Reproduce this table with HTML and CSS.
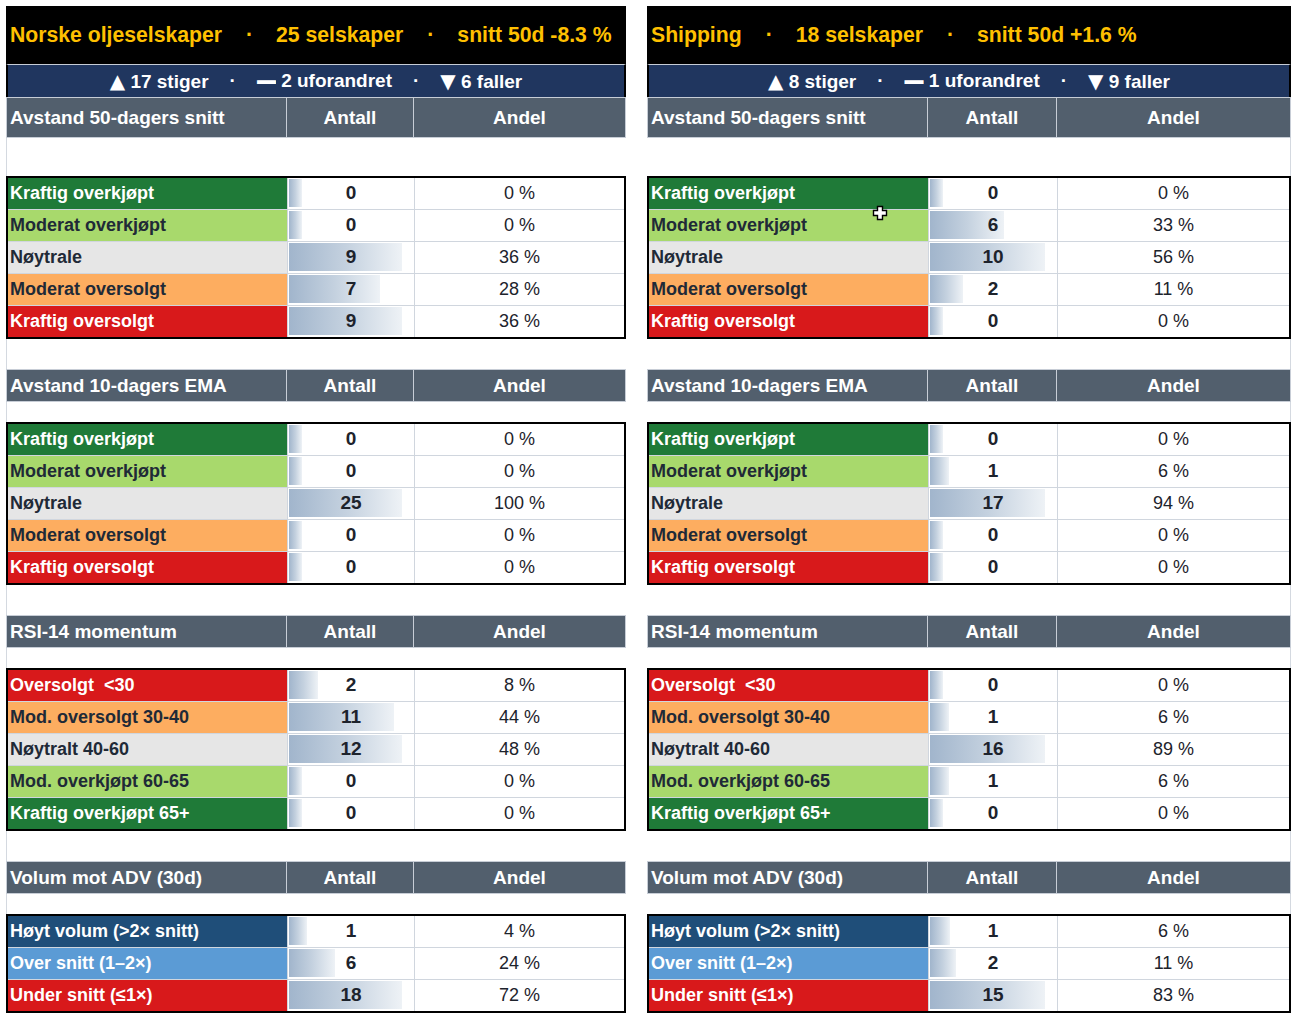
FILE: index.html
```html
<!DOCTYPE html>
<html lang="no">
<head>
<meta charset="utf-8">
<title>Oljeselskaper og shipping</title>
<link rel="stylesheet" href="styles.css">
</head>
<body>
<div class="sheet">

  <section class="panel panel-left">
    <div class="title"><span>Norske oljeselskaper</span><span class="tdot">·</span><span>25 selskaper</span><span class="tdot">·</span><span>snitt 50d -8.3 %</span></div>
    <div class="sub"><span><span class="tri">▲</span> 17 stiger</span><span class="sdot">·</span><span><span class="dash">—</span> 2 uforandret</span><span class="sdot">·</span><span><span class="tri">▼</span> 6 faller</span></div>

    <div class="hdr hdr-first"><div class="hc hc-label">Avstand 50-dagers snitt</div><div class="hc">Antall</div><div class="hc">Andel</div></div>
    <div class="gap gap-first"></div>
    <div class="tbl">
      <div class="row"><div class="lab c-dgreen">Kraftig overkjøpt</div><div class="cnt"><i class="bar" style="width:10%"></i><b>0</b></div><div class="pct">0 %</div></div>
      <div class="row"><div class="lab c-lgreen">Moderat overkjøpt</div><div class="cnt"><i class="bar" style="width:10%"></i><b>0</b></div><div class="pct">0 %</div></div>
      <div class="row"><div class="lab c-gray">Nøytrale</div><div class="cnt"><i class="bar" style="width:90%"></i><b>9</b></div><div class="pct">36 %</div></div>
      <div class="row"><div class="lab c-orange">Moderat oversolgt</div><div class="cnt"><i class="bar" style="width:72.2%"></i><b>7</b></div><div class="pct">28 %</div></div>
      <div class="row"><div class="lab c-red">Kraftig oversolgt</div><div class="cnt"><i class="bar" style="width:90%"></i><b>9</b></div><div class="pct">36 %</div></div>
    </div>
    <div class="gap gap-after"></div>

    <div class="hdr"><div class="hc hc-label">Avstand 10-dagers EMA</div><div class="hc">Antall</div><div class="hc">Andel</div></div>
    <div class="gap"></div>
    <div class="tbl">
      <div class="row"><div class="lab c-dgreen">Kraftig overkjøpt</div><div class="cnt"><i class="bar" style="width:10%"></i><b>0</b></div><div class="pct">0 %</div></div>
      <div class="row"><div class="lab c-lgreen">Moderat overkjøpt</div><div class="cnt"><i class="bar" style="width:10%"></i><b>0</b></div><div class="pct">0 %</div></div>
      <div class="row"><div class="lab c-gray">Nøytrale</div><div class="cnt"><i class="bar" style="width:90%"></i><b>25</b></div><div class="pct">100 %</div></div>
      <div class="row"><div class="lab c-orange">Moderat oversolgt</div><div class="cnt"><i class="bar" style="width:10%"></i><b>0</b></div><div class="pct">0 %</div></div>
      <div class="row"><div class="lab c-red">Kraftig oversolgt</div><div class="cnt"><i class="bar" style="width:10%"></i><b>0</b></div><div class="pct">0 %</div></div>
    </div>
    <div class="gap gap-after"></div>

    <div class="hdr"><div class="hc hc-label">RSI-14 momentum</div><div class="hc">Antall</div><div class="hc">Andel</div></div>
    <div class="gap"></div>
    <div class="tbl">
      <div class="row"><div class="lab c-red">Oversolgt  &lt;30</div><div class="cnt"><i class="bar" style="width:23.3%"></i><b>2</b></div><div class="pct">8 %</div></div>
      <div class="row"><div class="lab c-orange">Mod. oversolgt 30-40</div><div class="cnt"><i class="bar" style="width:83.3%"></i><b>11</b></div><div class="pct">44 %</div></div>
      <div class="row"><div class="lab c-gray">Nøytralt 40-60</div><div class="cnt"><i class="bar" style="width:90%"></i><b>12</b></div><div class="pct">48 %</div></div>
      <div class="row"><div class="lab c-lgreen">Mod. overkjøpt 60-65</div><div class="cnt"><i class="bar" style="width:10%"></i><b>0</b></div><div class="pct">0 %</div></div>
      <div class="row"><div class="lab c-dgreen">Kraftig overkjøpt 65+</div><div class="cnt"><i class="bar" style="width:10%"></i><b>0</b></div><div class="pct">0 %</div></div>
    </div>
    <div class="gap gap-after"></div>

    <div class="hdr"><div class="hc hc-label">Volum mot ADV (30d)</div><div class="hc">Antall</div><div class="hc">Andel</div></div>
    <div class="gap"></div>
    <div class="tbl">
      <div class="row"><div class="lab c-navy">Høyt volum (&gt;2× snitt)</div><div class="cnt"><i class="bar" style="width:14.4%"></i><b>1</b></div><div class="pct">4 %</div></div>
      <div class="row"><div class="lab c-blue">Over snitt (1–2×)</div><div class="cnt"><i class="bar" style="width:36.7%"></i><b>6</b></div><div class="pct">24 %</div></div>
      <div class="row"><div class="lab c-red">Under snitt (≤1×)</div><div class="cnt"><i class="bar" style="width:90%"></i><b>18</b></div><div class="pct">72 %</div></div>
    </div>
  </section>

  <section class="panel panel-right">
    <div class="title"><span>Shipping</span><span class="tdot">·</span><span>18 selskaper</span><span class="tdot">·</span><span>snitt 50d +1.6 %</span></div>
    <div class="sub"><span><span class="tri">▲</span> 8 stiger</span><span class="sdot">·</span><span><span class="dash">—</span> 1 uforandret</span><span class="sdot">·</span><span><span class="tri">▼</span> 9 faller</span></div>

    <div class="hdr hdr-first"><div class="hc hc-label">Avstand 50-dagers snitt</div><div class="hc">Antall</div><div class="hc">Andel</div></div>
    <div class="gap gap-first"></div>
    <div class="tbl">
      <div class="row"><div class="lab c-dgreen">Kraftig overkjøpt</div><div class="cnt"><i class="bar" style="width:10%"></i><b>0</b></div><div class="pct">0 %</div></div>
      <div class="row"><div class="lab c-lgreen">Moderat overkjøpt</div><div class="cnt"><i class="bar" style="width:58%"></i><b>6</b></div><div class="pct">33 %</div></div>
      <div class="row"><div class="lab c-gray">Nøytrale</div><div class="cnt"><i class="bar" style="width:90%"></i><b>10</b></div><div class="pct">56 %</div></div>
      <div class="row"><div class="lab c-orange">Moderat oversolgt</div><div class="cnt"><i class="bar" style="width:26%"></i><b>2</b></div><div class="pct">11 %</div></div>
      <div class="row"><div class="lab c-red">Kraftig oversolgt</div><div class="cnt"><i class="bar" style="width:10%"></i><b>0</b></div><div class="pct">0 %</div></div>
    </div>
    <div class="gap gap-after"></div>

    <div class="hdr"><div class="hc hc-label">Avstand 10-dagers EMA</div><div class="hc">Antall</div><div class="hc">Andel</div></div>
    <div class="gap"></div>
    <div class="tbl">
      <div class="row"><div class="lab c-dgreen">Kraftig overkjøpt</div><div class="cnt"><i class="bar" style="width:10%"></i><b>0</b></div><div class="pct">0 %</div></div>
      <div class="row"><div class="lab c-lgreen">Moderat overkjøpt</div><div class="cnt"><i class="bar" style="width:14.7%"></i><b>1</b></div><div class="pct">6 %</div></div>
      <div class="row"><div class="lab c-gray">Nøytrale</div><div class="cnt"><i class="bar" style="width:90%"></i><b>17</b></div><div class="pct">94 %</div></div>
      <div class="row"><div class="lab c-orange">Moderat oversolgt</div><div class="cnt"><i class="bar" style="width:10%"></i><b>0</b></div><div class="pct">0 %</div></div>
      <div class="row"><div class="lab c-red">Kraftig oversolgt</div><div class="cnt"><i class="bar" style="width:10%"></i><b>0</b></div><div class="pct">0 %</div></div>
    </div>
    <div class="gap gap-after"></div>

    <div class="hdr"><div class="hc hc-label">RSI-14 momentum</div><div class="hc">Antall</div><div class="hc">Andel</div></div>
    <div class="gap"></div>
    <div class="tbl">
      <div class="row"><div class="lab c-red">Oversolgt  &lt;30</div><div class="cnt"><i class="bar" style="width:10%"></i><b>0</b></div><div class="pct">0 %</div></div>
      <div class="row"><div class="lab c-orange">Mod. oversolgt 30-40</div><div class="cnt"><i class="bar" style="width:15%"></i><b>1</b></div><div class="pct">6 %</div></div>
      <div class="row"><div class="lab c-gray">Nøytralt 40-60</div><div class="cnt"><i class="bar" style="width:90%"></i><b>16</b></div><div class="pct">89 %</div></div>
      <div class="row"><div class="lab c-lgreen">Mod. overkjøpt 60-65</div><div class="cnt"><i class="bar" style="width:15%"></i><b>1</b></div><div class="pct">6 %</div></div>
      <div class="row"><div class="lab c-dgreen">Kraftig overkjøpt 65+</div><div class="cnt"><i class="bar" style="width:10%"></i><b>0</b></div><div class="pct">0 %</div></div>
    </div>
    <div class="gap gap-after"></div>

    <div class="hdr"><div class="hc hc-label">Volum mot ADV (30d)</div><div class="hc">Antall</div><div class="hc">Andel</div></div>
    <div class="gap"></div>
    <div class="tbl">
      <div class="row"><div class="lab c-navy">Høyt volum (&gt;2× snitt)</div><div class="cnt"><i class="bar" style="width:15.3%"></i><b>1</b></div><div class="pct">6 %</div></div>
      <div class="row"><div class="lab c-blue">Over snitt (1–2×)</div><div class="cnt"><i class="bar" style="width:20.7%"></i><b>2</b></div><div class="pct">11 %</div></div>
      <div class="row"><div class="lab c-red">Under snitt (≤1×)</div><div class="cnt"><i class="bar" style="width:90%"></i><b>15</b></div><div class="pct">83 %</div></div>
    </div>

    <svg class="cursor" width="16" height="16" viewBox="0 0 16 16" aria-hidden="true">
      <path d="M5.5 1.5h5v4h4v5h-4v4h-5v-4h-4v-5h4z" fill="#fff" stroke="#000" stroke-width="1.4" stroke-linejoin="miter"/>
    </svg>
  </section>

</div>
</body>
</html>
```

FILE: styles.css
```css
* { box-sizing: border-box; }

html, body {
  margin: 0;
  padding: 0;
  background: #ffffff;
}

body {
  font-family: "Liberation Sans", Arial, "DejaVu Sans", sans-serif;
  color: #1f2530;
}

.sheet {
  display: flex;
  align-items: flex-start;
  gap: 21px;
  padding: 6px 0 0 6px;
}

.panel {
  display: flex;
  flex-direction: column;
  position: relative;
}

.panel-left {
  --c1: 281px;
  --c2: 127px;
  --c3: 212px;
  width: 620px;
}

.panel-right {
  --c1: 281px;
  --c2: 129px;
  --c3: 234px;
  width: 644px;
}

/* Title bar */
.title {
  height: 58px;
  background: #000;
  color: #ffc000;
  font-weight: bold;
  font-size: 21.2px;
  display: flex;
  align-items: center;
  padding-left: 4px;
  white-space: pre;
}

.tdot {
  margin: 0 23px 0 24px;
}

/* Sub bar */
.sub {
  height: 33px;
  background: #20365f;
  border-top: 1px solid #c7cdd6;
  border-left: 2px solid #000;
  border-right: 2px solid #000;
  color: #fff;
  font-weight: bold;
  font-size: 19px;
  display: flex;
  align-items: center;
  justify-content: center;
  white-space: pre;
}

.sdot {
  margin: 0 21px;
}

.tri {
  font-family: "DejaVu Sans", sans-serif;
  font-size: 20px;
  font-weight: normal;
}

.dash {
  display: inline-block;
  font-size: 19px;
  font-weight: bold;
  transform: scaleY(2);
}

/* Header rows */
.hdr {
  display: grid;
  grid-template-columns: var(--c1) var(--c2) var(--c3);
  border-top: 1px solid #c7cdd6;
  border-bottom: 1px solid #c7cdd6;
  height: 33px;
}

.hdr-first {
  height: 41px;
}

.hc {
  background: #525f6d;
  color: #fff;
  font-weight: bold;
  font-size: 19px;
  display: flex;
  align-items: center;
  justify-content: center;
  border-right: 1px solid #c7cdd6;
}

.hc-label {
  justify-content: flex-start;
  padding-left: 3px;
  border-left: 1px solid #c7cdd6;
}

/* Spacer rows */
.gap {
  height: 20px;
}

.gap-first {
  height: 38px;
}

.gap-after {
  height: 30px;
}

.panel-left .gap {
  border-left: 1px solid #d4d9e0;
}

.panel-right .gap {
  border-right: 1px solid #d4d9e0;
}

/* Data tables */
.tbl {
  border: 2px solid #000;
  display: flex;
  flex-direction: column;
}

.row {
  display: grid;
  grid-template-columns: calc(var(--c1) - 2px) var(--c2) calc(var(--c3) - 2px);
  height: 32px;
  border-bottom: 1px solid #d0d6de;
}

.row:last-child {
  height: 31px;
  border-bottom: 0;
}

.lab {
  display: flex;
  align-items: center;
  padding-left: 2px;
  font-size: 18px;
  font-weight: bold;
  white-space: pre;
}

.cnt {
  display: grid;
  border-left: 1px solid #d0d6de;
  background: #fff;
}

.cnt .bar {
  grid-area: 1 / 1;
  justify-self: start;
  align-self: stretch;
  margin: 1px 0 2px 1px;
  background: linear-gradient(to right, #a1b5cc 0%, #c4d1df 50%, #eef2f6 100%);
}

.cnt b {
  grid-area: 1 / 1;
  place-self: center;
  font-size: 19px;
  line-height: 1;
  font-weight: bold;
  color: #1d232c;
  position: relative;
  top: -1px;
}

.pct {
  display: flex;
  align-items: center;
  justify-content: center;
  border-left: 1px solid #d0d6de;
  font-size: 18px;
  color: #1d232c;
  background: #fff;
}

/* Fill colours */
.c-dgreen { background: #1f7a38; color: #fff; }
.c-lgreen { background: #a8d96c; color: #1f2a37; }
.c-gray   { background: #e6e6e6; color: #1f2a37; }
.c-orange { background: #fdad60; color: #1f2a37; }
.c-red    { background: #d8191b; color: #fff; }
.c-navy   { background: #1f4e79; color: #fff; }
.c-blue   { background: #5b9bd5; color: #fff; }

/* Excel cell cursor overlay */
.cursor {
  position: absolute;
  left: 225px;
  top: 199px;
}
```
